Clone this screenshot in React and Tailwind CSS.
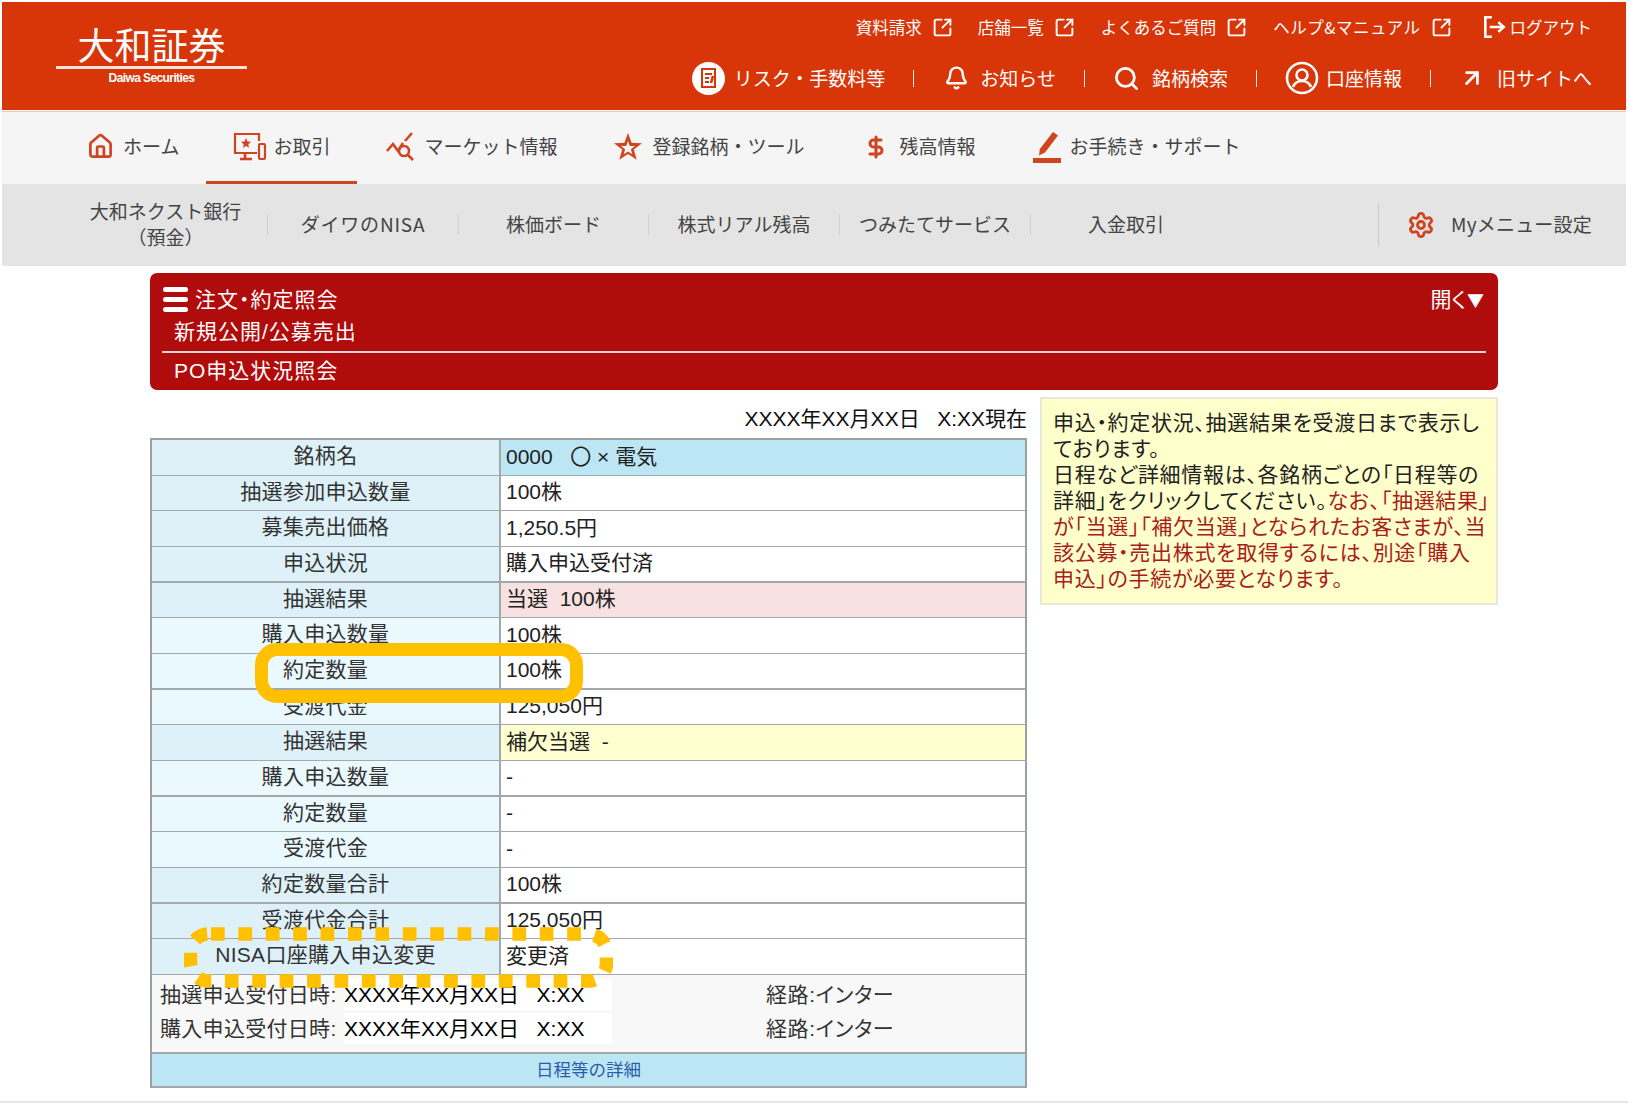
import React from "react";
import { SquareArrowOutUpRight, Bell, Search, ArrowUpRight, DollarSign, Settings, House } from "lucide-react";

const font = { fontFamily: '"Noto Sans CJK JP", "Noto Sans", sans-serif' };
const bodyFont = { fontFamily: '"Liberation Sans", "Noto Sans CJK JP", sans-serif' };

function TopLink({ label, className = "", labelClass = "" }) {
  return (
    <div className={`flex items-center gap-[10px] ${className}`}>
      <span className={labelClass}>{label}</span>
      <SquareArrowOutUpRight className="w-[21px] h-[21px]" strokeWidth={2.2} />
    </div>
  );
}

function Sep() {
  return <span className="w-px h-[17px] bg-white/90 mx-[28px]" />;
}

const rows = [
  ["銘柄名", "0000   〇 × 電気", "bg-[#bde6f5]"],
  ["抽選参加申込数量", "100株", ""],
  ["募集売出価格", "1,250.5円", ""],
  ["申込状況", "購入申込受付済", ""],
  ["抽選結果", "当選  100株", "bg-[#f7e1e1]"],
  ["購入申込数量", "100株", "", true],
  ["約定数量", "100株", "", true],
  ["受渡代金", "125,050円", "", true],
  ["抽選結果", "補欠当選  -", "bg-[#ffffcf]"],
  ["購入申込数量", "-", "", true],
  ["約定数量", "-", "", true],
  ["受渡代金", "-", "", true],
  ["約定数量合計", "100株", ""],
  ["受渡代金合計", "125,050円", ""],
  ["NISA口座購入申込変更", "変更済", ""],
];

function App() {
  return (
    <div style={font} className="w-[1628px] h-[1103px] bg-white pt-[2px] px-[2px] border-b-2 border-[#e6e6e6] text-[#333] overflow-hidden">
      {/* header */}
      <header className="h-[108px] bg-[#d83508] text-white flex justify-between pl-[54px] pr-[34px]">
        <div className="w-[191px] pt-[21px] flex flex-col items-center">
          <div className="text-[37px] leading-[42px] font-normal">大和証券</div>
          <div className="w-full h-[3px] bg-[#fbe3da] mt-[1px]" />
          <div style={{ fontFamily: '"Liberation Sans", sans-serif' }} className="text-[12px] leading-[14px] font-bold mt-[2px] tracking-[-0.6px]">Daiwa Securities</div>
        </div>
        <div className="flex flex-col items-end">
          <div className="flex items-center h-[26px] mt-[12px] text-[16.5px] leading-[26px]">
            <TopLink label="資料請求" className="mr-[25px]" />
            <TopLink label="店舗一覧" className="mr-[26px]" />
            <TopLink label="よくあるご質問" className="mr-[26px]" />
            <TopLink label="ヘルプ&マニュアル" className="mr-[29px]" labelClass="tracking-[0.5px]" />
            <svg viewBox="0 0 24 24" className="w-[26px] h-[26px] mr-[3px]" fill="none" stroke="currentColor" strokeWidth="2.4">
              <path d="M10 3H4v18h6" />
              <path d="M8 12h13M16 7.500l5 4.500-5 4.500" />
            </svg>
            <span>ログアウト</span>
          </div>
          <div className="flex items-center h-[36px] mt-[20px] text-[19px] leading-[36px] whitespace-nowrap">
            <span className="w-[33px] h-[33px] rounded-full bg-white flex items-center justify-center mr-[9px]">
              <svg viewBox="0 0 24 24" className="w-[24px] h-[24px]" fill="none" stroke="#d83508" strokeWidth="2">
                <path d="M6 3h13v18H6z" />
                <path d="M9 8h7M9 12h4M9 16h4" />
                <path d="M17 10l-2 7" strokeWidth="2.600" />
              </svg>
            </span>
            <span>リスク・手数料等</span>
            <Sep />
            <Bell className="w-[25px] h-[28px] ml-[2px] mr-[11px]" strokeWidth={2.3} />
            <span>お知らせ</span>
            <Sep />
            <Search className="w-[27px] h-[27px] mr-[12px]" strokeWidth={2.500} />
            <span>銘柄検索</span>
            <Sep />
            <svg viewBox="0 0 34 34" className="w-[34px] h-[34px] mr-[7px]" fill="none" stroke="currentColor" strokeWidth="2.600">
              <circle cx="17" cy="17" r="15" />
              <circle cx="17" cy="14" r="5.500" />
              <path d="M8 26c2-5 5-6 9-6s7 1 9 6" />
            </svg>
            <span>口座情報</span>
            <Sep />
            <ArrowUpRight className="w-[26px] h-[26px] mr-[12px]" strokeWidth={2.600} />
            <span>旧サイトへ</span>
          </div>
        </div>
      </header>

      {/* main nav */}
      <nav className="mt-[1px] h-[73px] bg-[#f5f5f5] flex pl-[58px] text-[19px] text-[#444] whitespace-nowrap border-t border-[#f3c4b5]">
        <div className="flex items-center gap-[9px] pl-[27px] pr-[27px] pb-[3px]">
          <House className="w-[27px] h-[27px] text-[#cf4520]" strokeWidth={2.400} />
          <span>ホーム</span>
        </div>
        <div className="flex items-center gap-[6px] px-[27px] border-b-[3px] border-[#cf4520]">
          <svg viewBox="0 0 34 30" className="w-[34px] h-[30px]" fill="none" stroke="#cf4520" strokeWidth="2.200">
            <path d="M26 9V2H2v19h22" />
            <path d="M12 21v6M7 27h12" strokeWidth="2.600" />
            <path d="M13 6l1.500 3.500 3.500.3-2.700 2.400.8 3.600-3.100-1.900-3.100 1.900.8-3.600-2.700-2.400 3.500-.3z" fill="#cf4520" stroke="none" />
            <rect x="26" y="12" width="6" height="15" rx="1" />
          </svg>
          <span>お取引</span>
        </div>
        <div className="flex items-center gap-[8px] px-[29px] pb-[3px]">
          <svg viewBox="0 0 30 30" className="w-[30px] h-[30px]" fill="none" stroke="#cf4520" strokeWidth="2.600">
            <path d="M1 19l6-7 5 7 5-8" />
            <path d="M19 9l7-8" />
            <circle cx="18" cy="19" r="5" />
            <path d="M22 23l5 5" />
          </svg>
          <span>マーケット情報</span>
        </div>
        <div className="flex items-center gap-[10px] px-[28px] pb-[3px]">
          <svg viewBox="0 0 28 28" className="w-[28px] h-[28px]">
            <path d="M14 0l3.600 9.800 10.400.4-8.200 6.400 2.900 10.100L14 20.900l-8.700 5.800 2.900-10.100L0 10.200l10.400-.4z" fill="#cf4520" />
            <path d="M14 8l1.800 4.900 5.200.2-4.100 3.200 1.400 5-4.300-2.900-4.300 2.900 1.400-5L7 13.100l5.200-.2z" fill="#f5f5f5" />
          </svg>
          <span>登録銘柄・ツール</span>
        </div>
        <div className="flex items-center gap-[11px] pl-[32px] pr-[30px] pb-[3px]">
          <DollarSign className="w-[24px] h-[30px] text-[#cf4520]" strokeWidth={3} />
          <span>残高情報</span>
        </div>
        <div className="flex items-center gap-[8px] pl-[26px] pb-[3px]">
          <svg viewBox="0 0 30 32" className="w-[30px] h-[32px]" fill="#cf4520">
            <path d="M21 1l5 3.500-13 17-6 3 .8-6.500z" />
            <path d="M1 27h28v5H1z" />
          </svg>
          <span>お手続き・サポート</span>
        </div>
      </nav>

      {/* sub nav */}
      <div className="h-[82px] bg-[#e4e4e4] flex items-center pl-[62px] pr-[34px] text-[19px] text-[#444] whitespace-nowrap">
        <div className="w-[203px] text-center leading-[26px] pb-[2px]">大和ネクスト銀行<br />（預金）</div>
        <div className="w-[191px] text-center border-l border-[#cfcfcf] h-[20px] flex items-center justify-center"><span className="tracking-[0.8px] pb-[2px]">ダイワのNISA</span></div>
        <div className="w-[190px] text-center border-l border-[#cfcfcf] h-[20px] flex items-center justify-center"><span className="pb-[2px]">株価ボード</span></div>
        <div className="w-[191px] text-center border-l border-[#cfcfcf] h-[20px] flex items-center justify-center"><span className="pb-[2px]">株式リアル残高</span></div>
        <div className="w-[191px] text-center border-l border-[#cfcfcf] h-[20px] flex items-center justify-center"><span className="pb-[2px]">つみたてサービス</span></div>
        <div className="w-[191px] text-center border-l border-[#cfcfcf] h-[20px] flex items-center justify-center"><span className="pb-[2px]">入金取引</span></div>
        <div className="ml-[157px] h-[42px] border-l border-[#c8c8c8] flex items-center pl-[28px] gap-[16px]">
          <Settings className="w-[28px] h-[28px] text-[#cf4520]" strokeWidth={2.400} />
          <span className="text-[19px] pb-[2px] tracking-[0.2px]">Myメニュー設定</span>
        </div>
      </div>

      {/* content */}
      <main style={bodyFont} className="ml-[148px] w-[1348px] pt-[7px]">
        <section className="h-[117px] rounded-[7px] bg-[#b10c0c] text-white px-[12px] relative text-[21px] [font-feature-settings:'palt']">
          <div className="flex items-center justify-between pt-[13px] h-[40px] pr-[2px]">
            <div className="flex items-center gap-[7px] pl-[1px]">
              <div className="w-[25px] flex flex-col gap-[5px]">
                <span className="h-[5px] rounded-full bg-white" />
                <span className="h-[5px] rounded-full bg-white" />
                <span className="h-[5px] rounded-full bg-white" />
              </div>
              <span className="leading-[28px] tracking-[1px]">注文・約定照会</span>
            </div>
            <span className="flex items-center"><span>開く</span><span style={font} className="text-[17px] ml-[1px]">▼</span></span>
          </div>
          <div className="pl-[12px] leading-[32px] h-[38px] pt-[3px] tracking-[1px]">新規公開/公募売出</div>
          <div className="h-[2px] bg-[#f0d4d4]" />
          <div className="pl-[12px] leading-[36px] tracking-[1px]">PO申込状況照会</div>
        </section>

        <div className="flex gap-[13px] pt-[7px]">
          <div className="w-[877px] shrink-0">
            <div className="h-[41px] flex items-center justify-end text-[21px] text-[#111] whitespace-pre pt-[3px]">XXXX年XX月XX日   X:XX現在</div>
            <div className="relative border-2 border-[#9aa0a3] border-b-0 text-[21px]">
              {rows.map(([label, value, cls, light], i) => (
                <div key={i} className="grid grid-cols-[349px_1fr] h-[35.67px] border-b-2 border-[#a3a8aa]">
                  <div className={`flex items-center justify-center border-r-2 border-[#a3a8aa] pb-[3px] tracking-[0.3px] ${light ? "bg-[#eaf9fe]" : "bg-[#dff1f8]"}`}>{label}</div>
                  <div className={`flex items-center pl-[5px] pb-[2px] text-[#222] whitespace-pre ${cls || "bg-white"}`}>{value}</div>
                </div>
              ))}
              <div className="h-[77px] bg-[#f8f8f8] px-[8px] pt-[6px] text-[#333]">
                <div className="flex items-center h-[27px] mb-[7px]">
                  <span className="w-[184px] shrink-0 whitespace-nowrap [font-feature-settings:'palt'] tracking-[0.3px]">抽選申込受付日時:</span>
                  <span className="w-[268px] bg-white text-black whitespace-pre">XXXX年XX月XX日   X:XX</span>
                  <span className="ml-[154px] [font-feature-settings:'palt'] tracking-[0.6px]">経路:インター</span>
                </div>
                <div className="flex items-center h-[27px]">
                  <span className="w-[184px] shrink-0 whitespace-nowrap [font-feature-settings:'palt'] tracking-[0.3px]">購入申込受付日時:</span>
                  <span className="w-[268px] bg-white text-black whitespace-pre">XXXX年XX月XX日   X:XX</span>
                  <span className="ml-[154px] [font-feature-settings:'palt'] tracking-[0.6px]">経路:インター</span>
                </div>
              </div>
              <div className="h-[36px] bg-[#bde6f5] border-y-2 border-[#a3a8aa] flex items-center justify-center text-[#2a5ca8] text-[17.500px]">日程等の詳細</div>

              <div className="absolute left-[103px] top-[203px] w-[328px] h-[60px] border-[13px] border-[#ffc000] rounded-[22px]" />
              <svg className="absolute left-[32px] top-[487px] w-[429px] h-[61px]" viewBox="0 0 429 61" fill="none">
                <rect x="6.500" y="7" width="416" height="47" rx="18" stroke="#ffc000" strokeWidth="13.500" strokeDasharray="13.700 13.700" strokeDashoffset="-2.500" />
              </svg>
            </div>
          </div>
          <aside className="w-[458px] h-[208px] bg-[#ffffcc] border-2 border-[#e8e8d8] pl-[11px] pt-[11px] text-[21px] leading-[26px] text-[#222] whitespace-nowrap tracking-[0.7px] [font-feature-settings:'palt']">
            申込・約定状況、抽選結果を受渡日まで表示し
            <br />
            ております。
            <br />
            日程など詳細情報は、各銘柄ごとの「日程等の
            <br />
            詳細」をクリックしてください。
            <span className="text-[#a8201a]">
              なお、「抽選結果」
              <br />
              が「当選」「補欠当選」となられたお客さまが、当
              <br />
              該公募・売出株式を取得するには、別途「購入
              <br />
              申込」の手続が必要となります。
            </span>
          </aside>
        </div>
      </main>
    </div>
  );
}

export default App;
